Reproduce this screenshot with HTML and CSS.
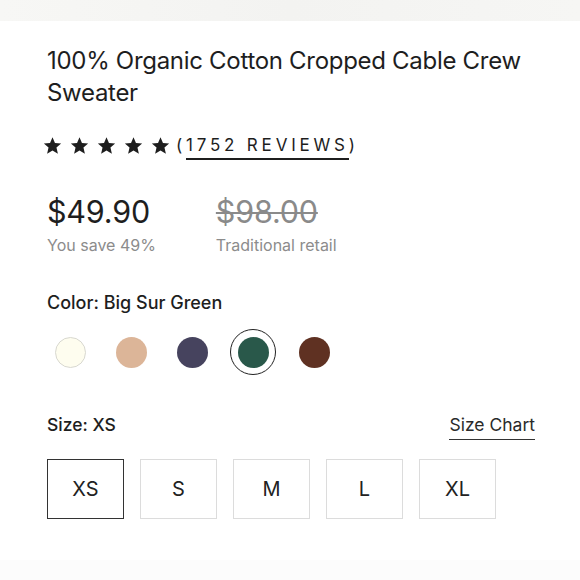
FILE: index.html
```html
<!DOCTYPE html>
<html>
<head>
<meta charset="utf-8">
<link rel="stylesheet" href="styles.css">
</head>
<body>
<div class="topband"></div>
<main class="product">
  <h1 class="title">100% Organic Cotton Cropped Cable Crew Sweater</h1>
  <div class="rating">
    <div class="stars">
      <svg viewBox="0 0 24 24" class="star"><path d="M12 1.5l3.1 7.2 7.8.7-5.9 5.2 1.8 7.7L12 18.3l-6.8 4 1.8-7.7-5.9-5.2 7.8-.7z"/></svg>
      <svg viewBox="0 0 24 24" class="star"><path d="M12 1.5l3.1 7.2 7.8.7-5.9 5.2 1.8 7.7L12 18.3l-6.8 4 1.8-7.7-5.9-5.2 7.8-.7z"/></svg>
      <svg viewBox="0 0 24 24" class="star"><path d="M12 1.5l3.1 7.2 7.8.7-5.9 5.2 1.8 7.7L12 18.3l-6.8 4 1.8-7.7-5.9-5.2 7.8-.7z"/></svg>
      <svg viewBox="0 0 24 24" class="star"><path d="M12 1.5l3.1 7.2 7.8.7-5.9 5.2 1.8 7.7L12 18.3l-6.8 4 1.8-7.7-5.9-5.2 7.8-.7z"/></svg>
      <svg viewBox="0 0 24 24" class="star"><path d="M12 1.5l3.1 7.2 7.8.7-5.9 5.2 1.8 7.7L12 18.3l-6.8 4 1.8-7.7-5.9-5.2 7.8-.7z"/></svg>
    </div>
    <span class="reviews">(<span class="reviews-link">1752 REVIEWS</span>)</span>
  </div>
  <div class="prices">
    <div class="price-col">
      <div class="price">$49.90</div>
      <div class="price-note">You save 49%</div>
    </div>
    <div class="price-col">
      <div class="price old">$98.00</div>
      <div class="price-note">Traditional retail</div>
    </div>
  </div>
  <div class="label color-label">Color: Big Sur Green</div>
  <div class="swatches">
    <span class="swatch"><span class="dot cream"></span></span>
    <span class="swatch"><span class="dot tan"></span></span>
    <span class="swatch"><span class="dot navy"></span></span>
    <span class="swatch selected"><span class="dot green"></span></span>
    <span class="swatch"><span class="dot brown"></span></span>
  </div>
  <div class="size-head">
    <div class="label">Size: XS</div>
    <div class="size-chart">Size Chart</div>
  </div>
  <div class="sizes">
    <div class="size selected">XS</div>
    <div class="size">S</div>
    <div class="size">M</div>
    <div class="size">L</div>
    <div class="size">XL</div>
  </div>
</main>
<div class="bottomband"></div>
</body>
</html>
```
FILE: styles.css
```css
* { box-sizing: border-box; }
html, body { margin: 0; padding: 0; background: #fff; }
body {
  width: 580px;
  height: 580px;
  overflow: hidden;
  font-family: Inter, "Liberation Sans", sans-serif;
  color: #1e1e1e;
  display: flex;
  flex-direction: column;
}
.topband {
  height: 21px;
  flex: none;
  background: linear-gradient(90deg, #f7f7f5 0%, #f3f3f1 50%, #f6f6f4 100%);
}
.product {
  padding: 0 45px 0 47px;
  flex: 1;
}
.title {
  margin: 24px 0 0;
  font-size: 24px;
  font-weight: 400;
  line-height: 32px;
  letter-spacing: -0.3px;
  color: #1e1e1e;
}
.rating {
  display: flex;
  align-items: center;
  margin-top: 23px;
  margin-left: -4px;
  height: 26px;
}
.stars { display: flex; gap: 8px; }
.star { width: 19px; height: 19px; fill: #1e1e1e; }
.reviews {
  margin-left: 6px;
  font-size: 17px;
  letter-spacing: 3.8px;
  color: #1e1e1e;
}
.reviews-link {
  border-bottom: 2px solid #1e1e1e;
  padding-bottom: 3px;
}
.prices {
  display: flex;
  gap: 60px;
  margin-top: 36px;
}
.price-col { display: flex; flex-direction: column; }
.price {
  font-size: 30.5px;
  line-height: 36px;
  letter-spacing: -0.2px;
}
.price.old {
  color: #8a8a8a;
  text-decoration: line-through;
  text-decoration-thickness: 2px;
}
.price-note {
  font-size: 16px;
  line-height: 22px;
  color: #8c8c8c;
  margin-top: 4px;
}
.label {
  font-size: 17.5px;
  font-weight: 500;
  line-height: 24px;
}
.color-label { margin-top: 35px; font-size: 18px; }
.swatches {
  display: flex;
  gap: 15px;
  margin-top: 14px;
}
.swatch {
  width: 46px;
  height: 46px;
  border-radius: 50%;
  display: flex;
  align-items: center;
  justify-content: center;
}
.swatch.selected { border: 1.5px solid #222; }
.dot { width: 31px; height: 31px; border-radius: 50%; }
.cream { background: #fefdef; border: 1px solid #d8d8d0; }
.tan { background: #dcb598; }
.navy { background: #46435e; }
.green { background: #29584a; }
.brown { background: #5f3122; }
.size-head {
  display: flex;
  justify-content: space-between;
  align-items: flex-start;
  margin-top: 38px;
}
.size-chart {
  font-size: 17.5px;
  line-height: 24px;
  color: #2a2a2a;
  border-bottom: 1.5px solid #333;
  padding-bottom: 2px;
}
.sizes {
  display: flex;
  gap: 16px;
  margin-top: 19px;
}
.size {
  width: 77px;
  height: 60px;
  border: 1.5px solid #dcdcdc;
  display: flex;
  align-items: center;
  justify-content: center;
  font-size: 20px;
  color: #222;
}
.size.selected { border-color: #333; }
.bottomband {
  height: 20px;
  flex: none;
  background: #fcfcfc;
}
```
